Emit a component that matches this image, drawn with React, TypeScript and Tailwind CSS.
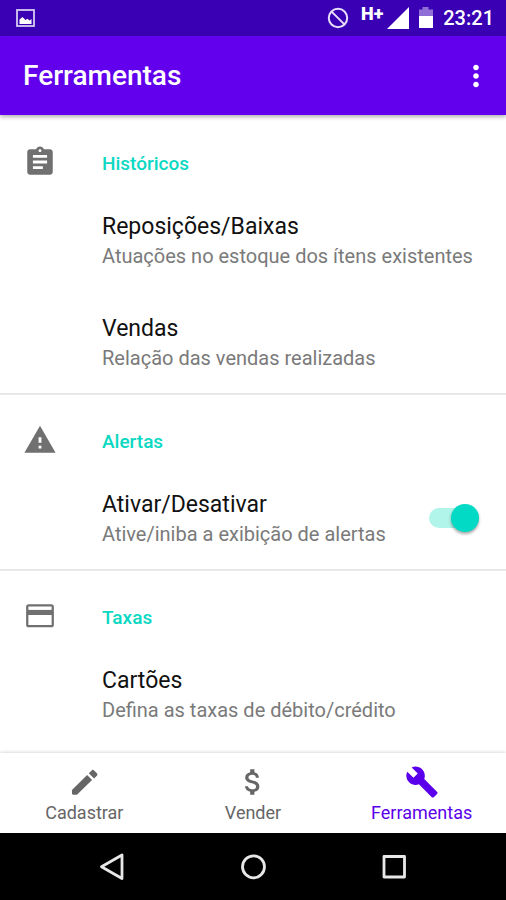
import React, { useState } from "react";
import { MdAssignment, MdAttachMoney, MdBuild, MdMoreVert, MdWarning } from "react-icons/md";

type Icon = React.ComponentType<{ className?: string }>;

function PencilIcon({ className }: { className?: string }) {
  return (
    <svg className={className} viewBox="0 0 24 24" fill="currentColor">
      <path d="M3.500 17.700L14.200 7l3.500 3.500L7 21H4.300a.8.8 0 0 1-.8-.8z" />
      <path d="M15.400 5.800l2-2a1.200 1.200 0 0 1 1.700 0l2 2a1.200 1.200 0 0 1 0 1.700l-2 2z" />
    </svg>
  );
}

function CardIcon({ className }: { className?: string }) {
  return (
    <svg className={className} viewBox="0 0 24 24">
      <rect x="3" y="4.500" width="18" height="14.700" rx="1" fill="none" stroke="currentColor" strokeWidth="1.600" />
      <path d="M3 7.700h18v3.600H3z" fill="currentColor" />
    </svg>
  );
}

function StatusBar() {
  return (
    <div className="flex h-9 items-center justify-between bg-[#3a00b3] pl-4 pr-3 text-white">
      <svg className="h-[18px] w-[20px]" viewBox="0 0 20 18" fill="none">
        <rect x="1" y="1" width="17" height="16" stroke="#d5cbf2" strokeWidth="1.8" />
        <path d="M3.500 15v-4.500l3-2.500 3 3 2-1.200 2 1.700 2-1.500V15z" fill="#fff" />
      </svg>
      <div className="flex items-center gap-2">
        <svg className="size-[22px]" viewBox="0 0 22 22" fill="none" stroke="#e6defa" strokeWidth="2">
          <circle cx="11" cy="11" r="9.2" />
          <path d="M4.600 4.600l12.800 12.800" />
        </svg>
        <div className="flex items-center gap-1">
          <span className="pb-2 pl-1 text-[18px] leading-5 font-black">H+</span>
          <svg className="size-[22px]" viewBox="0 0 22 22" fill="#fff">
            <path d="M22 0v22H0z" />
          </svg>
        </div>
        <svg className="h-[22px] w-[18px]" viewBox="0 0 18 22">
          <path d="M5.500 0h6v2.500H16V10H2V2.500h3.500z" fill="#8f6fd6" />
          <path d="M2 9h14v12H2z" fill="#fff" />
        </svg>
        <span className="text-[20px] leading-6 font-medium">23:21</span>
      </div>
    </div>
  );
}

function Section({ icon: Icon, title, children }: { icon: Icon; title: string; children: React.ReactNode }) {
  return (
    <section className="border-b-2 border-[#e8e8e8] last:border-b-0">
      <div className="flex gap-[45px] pt-7 pr-6 pb-1.5 pl-[23px]">
        <Icon className="size-[34px] shrink-0 text-[#707070]" />
        <h2 className="text-[19px] leading-[38px] font-medium text-[#0ad8c2]">{title}</h2>
      </div>
      {children}
    </section>
  );
}

function ItemText({ title, description }: { title: string; description: string }) {
  return (
    <span className="block flex-1">
      <span className="block text-[23px] leading-8 text-[#111]">{title}</span>
      <span className="block text-[20px] leading-[26px] text-[#7a7a7a]">{description}</span>
    </span>
  );
}

function Item({ title, description }: { title: string; description: string }) {
  return (
    <button type="button" className="flex w-full py-[22px] pr-6 pl-[102px] text-left">
      <ItemText title={title} description={description} />
    </button>
  );
}

function SwitchItem({ title, description }: { title: string; description: string }) {
  const [checked, setChecked] = useState(true);

  return (
    <label className="flex w-full items-center py-[22px] pr-[27px] pl-[102px]">
      <ItemText title={title} description={description} />
      <input
        type="checkbox"
        role="switch"
        checked={checked}
        onChange={(e) => setChecked(e.target.checked)}
        className="relative h-7 w-[50px] shrink-0 appearance-none before:absolute before:inset-x-0 before:inset-y-1 before:rounded-full before:bg-gray-300 after:absolute after:top-0 after:left-0 after:size-7 after:rounded-full after:bg-gray-50 after:shadow-[0_2px_3px_rgba(0,0,0,0.35)] checked:before:bg-[#b0f4ea] checked:after:right-0 checked:after:left-auto checked:after:bg-[#03dac5]"
      />
    </label>
  );
}

function NavItem({ icon: Icon, label, active }: { icon: Icon; label: string; active?: boolean }) {
  return (
    <a
      href="#"
      aria-current={active ? "page" : undefined}
      className={`flex flex-col items-center pt-3 pb-1.5 ${active ? "text-[#5b00ea]" : "text-[#666]"}`}
    >
      <Icon className="size-[34px]" />
      <span className="text-[18px] leading-7">{label}</span>
    </a>
  );
}

export default function App() {
  return (
    <div className="flex min-h-screen flex-col bg-white font-['Roboto',sans-serif]">
      <StatusBar />

      <header className="z-10 flex items-center justify-between bg-[#6200ee] py-5 pr-[13px] pl-[23px] text-white shadow-[0_2px_4px_rgba(0,0,0,0.3)]">
        <h1 className="text-[28px] leading-[39px] font-medium">Ferramentas</h1>
        <button type="button" aria-label="Mais opções">
          <MdMoreVert className="size-[34px]" />
        </button>
      </header>

      <main className="flex-1 pt-0.5">
        <Section icon={MdAssignment} title="Históricos">
          <Item title="Reposições/Baixas" description="Atuações no estoque dos ítens existentes" />
          <Item title="Vendas" description="Relação das vendas realizadas" />
        </Section>
        <Section icon={MdWarning} title="Alertas">
          <SwitchItem title="Ativar/Desativar" description="Ative/iniba a exibição de alertas" />
        </Section>
        <Section icon={CardIcon} title="Taxas">
          <Item title="Cartões" description="Defina as taxas de débito/crédito" />
        </Section>
      </main>

      <nav className="grid grid-cols-3 bg-white shadow-[0_-1px_3px_rgba(0,0,0,0.15)]">
        <NavItem icon={PencilIcon} label="Cadastrar" />
        <NavItem icon={MdAttachMoney} label="Vender" />
        <NavItem icon={MdBuild} label="Ferramentas" active />
      </nav>

      <div className="grid grid-cols-3 bg-black px-[42px] py-[18px]">
        <button type="button" aria-label="Voltar" className="flex justify-center">
          <svg className="h-[31px] w-[30px]" viewBox="0 0 30 31" fill="none" stroke="#e8e8e8" strokeWidth="2.8" strokeLinejoin="round">
            <path d="M25 4v23.500L4.500 15.800z" />
          </svg>
        </button>
        <button type="button" aria-label="Início" className="flex justify-center">
          <svg className="h-[31px] w-[30px]" viewBox="0 0 30 31" fill="none" stroke="#e8e8e8" strokeWidth="2.8">
            <circle cx="15.500" cy="15.800" r="11" />
          </svg>
        </button>
        <button type="button" aria-label="Recentes" className="flex justify-center">
          <svg className="h-[31px] w-[30px]" viewBox="0 0 30 31" fill="none" stroke="#e8e8e8" strokeWidth="2.8" strokeLinejoin="round">
            <rect x="5" y="5.500" width="20.500" height="20.500" />
          </svg>
        </button>
      </div>
    </div>
  );
}
